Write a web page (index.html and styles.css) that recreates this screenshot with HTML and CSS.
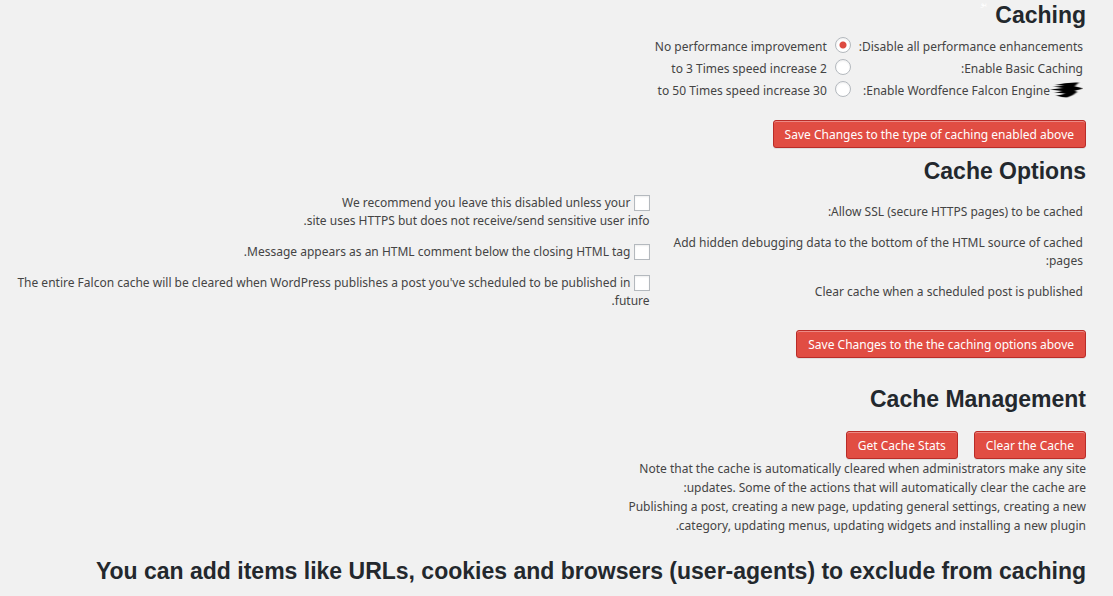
FILE: index.html
```html
<!DOCTYPE html>
<html lang="en" dir="rtl">
<head>
<meta charset="utf-8">
<title>Caching</title>
<link rel="stylesheet" href="styles.css">
</head>
<body>
<main class="page">
  <span class="tail" aria-hidden="true">يو</span>
  <h2 class="title">Caching</h2>
  <table class="modes">
    <tr>
      <th><label for="mode-off">Disable all performance enhancements:</label></th>
      <td><input class="radio" type="radio" name="mode" id="mode-off" checked></td>
      <td>No performance improvement</td>
    </tr>
    <tr>
      <th><label for="mode-basic">Enable Basic Caching:</label></th>
      <td><input class="radio" type="radio" name="mode" id="mode-basic"></td>
      <td>2 to 3 Times speed increase</td>
    </tr>
    <tr>
      <th><label class="falcon-label" for="mode-falcon"><svg class="falcon" viewBox="0 0 33 18" aria-hidden="true"><defs><filter id="soft" x="-10%" y="-10%" width="120%" height="120%"><feGaussianBlur stdDeviation="1.1 0.5"/></filter></defs><g filter="url(#soft)"><path d="M5 3Q16 0 29 0.500L26 3L25 4.500Q29 5 33 6.500Q29 8 25 8.500L27 10Q23 14 17 15.500Q12 15.500 6 13.500Q12 13 15 11.500L4 10.500Q9 10 12 9L0 7.500Q7 6.500 13 6L3 4.500Q9 4.500 14 3.500Z"/></g></svg><span>Enable Wordfence Falcon Engine:</span></label></th>
      <td><input class="radio" type="radio" name="mode" id="mode-falcon"></td>
      <td>30 to 50 Times speed increase</td>
    </tr>
  </table>
  <div class="actions"><button class="button" type="button">Save Changes to the type of caching enabled above</button></div>

  <h2 class="title">Cache Options</h2>
  <table class="options">
    <tr>
      <th><label for="ssl">Allow SSL (secure HTTPS pages) to be cached:</label></th>
      <td><input class="check" type="checkbox" id="ssl"> We recommend you leave this disabled unless your<br>site uses HTTPS but does not receive/send sensitive user info.</td>
    </tr>
    <tr>
      <th><label for="debug">Add hidden debugging data to the bottom of the HTML source of cached pages:</label></th>
      <td><input class="check" type="checkbox" id="debug"> Message appears as an HTML comment below the closing HTML tag.</td>
    </tr>
    <tr>
      <th><label for="scheduled">Clear cache when a scheduled post is published</label></th>
      <td><input class="check" type="checkbox" id="scheduled"> The entire Falcon cache will be cleared when WordPress publishes a post you've scheduled to be published in future.</td>
    </tr>
  </table>
  <div class="actions actions-options"><button class="button" type="button">Save Changes to the the caching options above</button></div>

  <h2 class="title title-spaced">Cache Management</h2>
  <div class="actions actions-tight">
    <button class="button" type="button">Clear the Cache</button>
    <button class="button" type="button">Get Cache Stats</button>
  </div>
  <p class="note">Note that the cache is automatically cleared when administrators make any site<br>updates. Some of the actions that will automatically clear the cache are:<br>Publishing a post, creating a new page, updating general settings, creating a new<br>category, updating menus, updating widgets and installing a new plugin.</p>

  <h2 class="title title-last">You can add items like URLs, cookies and browsers (user-agents) to exclude from caching</h2>
</main>
</body>
</html>
```
FILE: styles.css
```css
body {
  margin: 0;
  background: #f1f1f1;
  color: #444;
  font: 12px/18px "Noto Sans", sans-serif;
}

.page {
  position: relative;
  padding-right: 27px;
}

.tail {
  position: absolute;
  top: 0;
  right: 126px;
  color: #fff;
  font: 8px/8px "DejaVu Sans", sans-serif;
}

.title {
  margin: 0;
  color: #23282d;
  font: bold 23px/30px "Liberation Sans", Arial, sans-serif;
}

.title-spaced {
  margin-top: 26px;
}

.title-last {
  margin-top: 21px;
}

table {
  border-spacing: 0;
}

th,
td {
  padding: 0;
  font-weight: 400;
  text-align: right;
}

.modes {
  margin: 6px 3px 0 0;
}

.modes tr {
  height: 22px;
}

.modes td {
  padding-right: 8px;
}

.falcon-label {
  display: flex;
  align-items: center;
}

.falcon {
  width: 33px;
  height: 18px;
}

.radio,
.check {
  appearance: none;
  box-sizing: border-box;
  width: 16px;
  height: 16px;
  margin: 0;
  border: 1px solid #b4b9be;
  background: #fff;
  box-shadow: inset 0 1px 2px rgba(0, 0, 0, 0.07);
}

.radio {
  display: block;
  margin-bottom: 4px;
  border-radius: 50%;
}

.radio:checked {
  background: radial-gradient(circle, #dd4b41 3px, #fff 4px);
}

.check {
  vertical-align: -4px;
}

.options {
  width: 100%;
  margin-top: 8px;
}

.options th {
  width: 40%;
  padding: 0 3px 4px 0;
}

.options td {
  padding: 0 2px 4px 0;
}

.actions {
  display: flex;
  gap: 16px;
  margin: 18px 0 8px;
}

.actions-options {
  margin-top: 16px;
}

.actions-tight {
  margin: 17px 0 0;
}

.button {
  height: 28px;
  padding: 2px 11px 0;
  border: 1px solid #b92c28;
  border-radius: 3px;
  background: #e14d43;
  color: #fff;
  box-shadow: inset 0 1px 0 #ec8a85, 0 1px 0 rgba(0, 0, 0, 0.08);
  font: inherit;
}

.note {
  margin: 0;
  line-height: 19px;
}
```
